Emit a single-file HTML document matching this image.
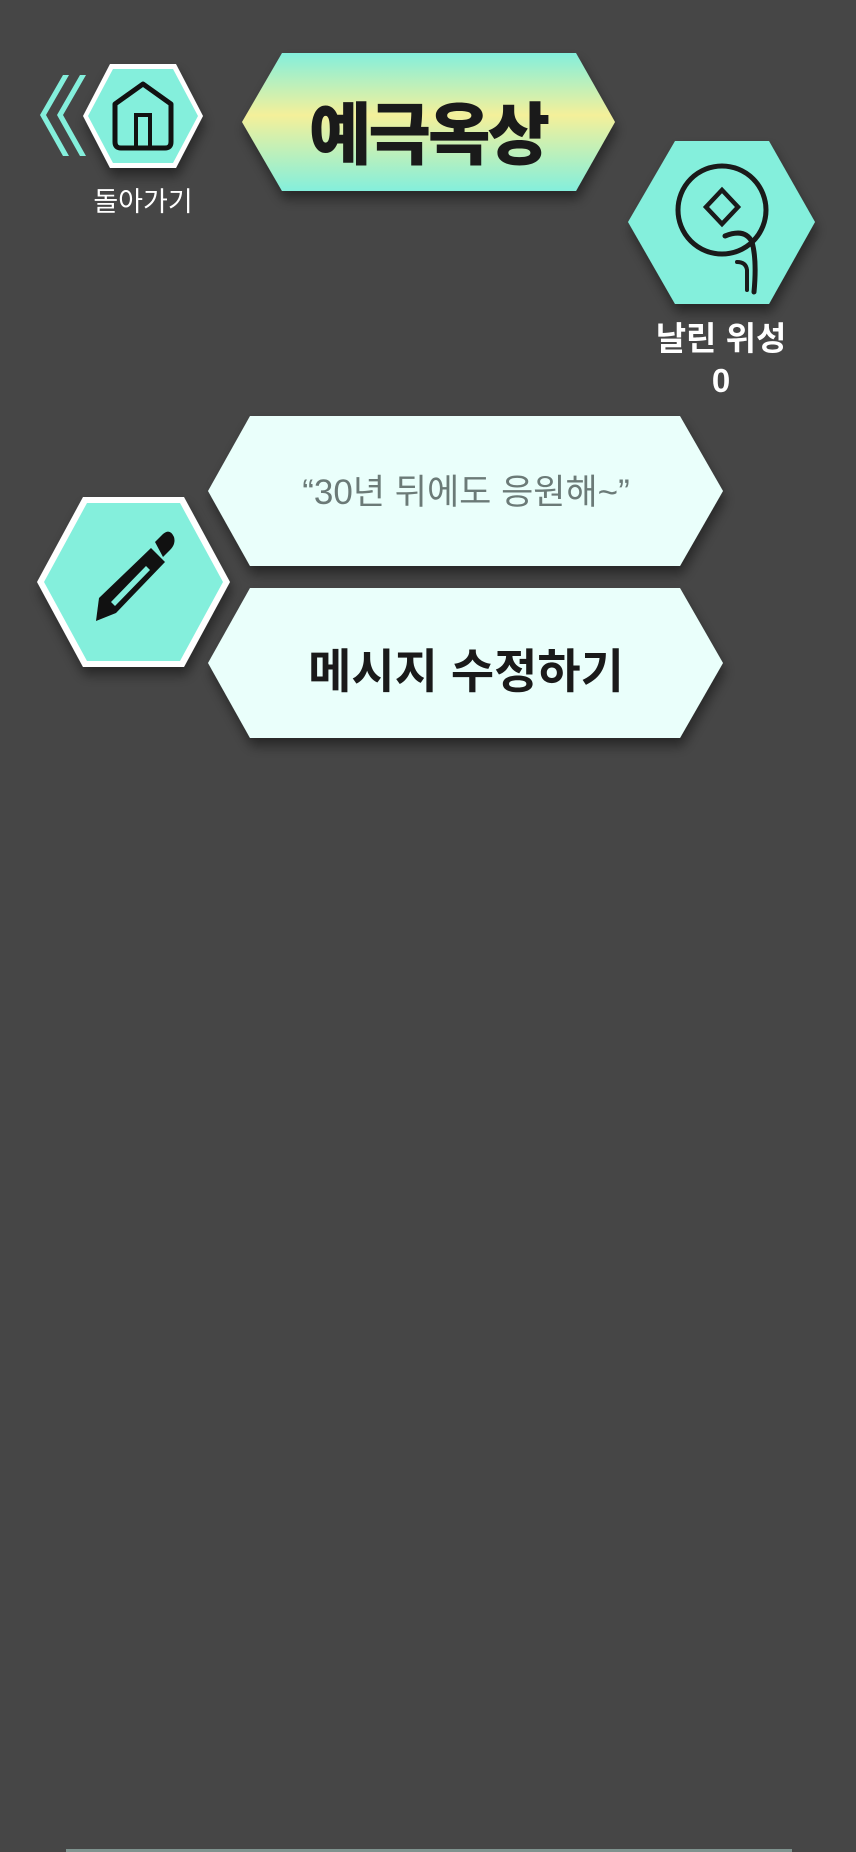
<!DOCTYPE html>
<html><head><meta charset="utf-8"><style>
html,body{margin:0;padding:0;background:#464646;}
body{width:856px;height:1852px;position:relative;overflow:hidden;font-family:"Liberation Sans","Noto Sans CJK KR",sans-serif;}
.t{position:absolute;white-space:nowrap;text-align:center;transform:translateX(-50%);}
</style></head><body>
<svg width="856" height="1852" style="position:absolute;left:0;top:0">
<defs>
<linearGradient id="g" x1="0" y1="0" x2="0" y2="1">
<stop offset="0" stop-color="#84efdc"/><stop offset="0.45" stop-color="#f4f09a"/><stop offset="1" stop-color="#84efdc"/>
</linearGradient>
<filter id="sh" x="-20%" y="-20%" width="140%" height="150%"><feDropShadow dx="2" dy="8" stdDeviation="6" flood-color="#000" flood-opacity="0.45"/></filter>
</defs>
<polygon points="63,75 69,75 46,115 69,156 63,156 40,115" fill="#84efdc"/>
<polygon points="80,75 86,75 63,115 86,156 80,156 57,115" fill="#84efdc"/>
<polygon points="110,64 176,64 203,116 176,168 110,168 83,116" fill="#fff" filter="url(#sh)"/>
<polygon points="113,69 173,69 198,116 173,163 113,163 88,116" fill="#84efdc"/>
<path d="M115,104 L143,84 L171,104 L171,142 Q171,148 165,148 L121,148 Q115,148 115,142 Z" fill="none" stroke="#111" stroke-width="5" stroke-linejoin="round"/>
<rect x="136" y="115" width="14" height="33" fill="none" stroke="#111" stroke-width="4"/>
<polygon points="282,53 576,53 615,122 576,191 282,191 242,122" fill="url(#g)" filter="url(#sh)"/>
<polygon points="675,141 769,141 815,222 769,304 675,304 628,222" fill="#84efdc" filter="url(#sh)"/>
<ellipse cx="722" cy="210" rx="44" ry="44" fill="none" stroke="#1a1a1a" stroke-width="5"/>
<polygon points="722,190 738,207 722,224 706,207" fill="none" stroke="#1a1a1a" stroke-width="4.5"/>
<path d="M725,236 Q745,228 752,242 Q757,260 754,292" fill="none" stroke="#1a1a1a" stroke-width="5" stroke-linecap="round"/>
<path d="M737,262 Q746,262 747,270 L747,290" fill="none" stroke="#1a1a1a" stroke-width="4" stroke-linecap="round"/>
<polygon points="250,416 680,416 723,491 680,566 250,566 208,491" fill="#eafffb" filter="url(#sh)"/>
<polygon points="250,588 680,588 723,663 680,738 250,738 208,663" fill="#eafffb" filter="url(#sh)"/>
<polygon points="83,497 184,497 230,582 184,667 83,667 37,582" fill="#fff" filter="url(#sh)"/>
<polygon points="87,503 180,503 223,582 180,661 87,661 44,582" fill="#84efdc"/>
<path d="M96,621 L99,598 L151,548 L165,562 L116,613 Z" fill="#111"/>
<path d="M155,542 L163,534 Q170,528 174,537 Q176,544 170,550 L163,557 Z" fill="#111"/>
<path d="M111,602 L146,566 L150,570 L115,606 Z" fill="#84efdc"/>
<rect x="66" y="1849" width="726" height="3" fill="#7f938f"/>
</svg>
<div class="t" style="left:143px;top:180px;font-size:27px;color:#fff;">돌아가기</div>
<div class="t" style="left:428px;top:80px;font-size:68px;font-weight:900;color:#1a1a1a;letter-spacing:-3px;">예극옥상</div>
<div class="t" style="left:721px;top:318px;font-size:33px;font-weight:bold;color:#fff;line-height:42px;">날린 위성<br>0</div>
<div class="t" style="left:466px;top:464px;font-size:35px;color:#6b7a77;">“30년 뒤에도 응원해~”</div>
<div class="t" style="left:466px;top:633px;font-size:47px;font-weight:bold;color:#1a1a1a;">메시지 수정하기</div>
</body></html>
